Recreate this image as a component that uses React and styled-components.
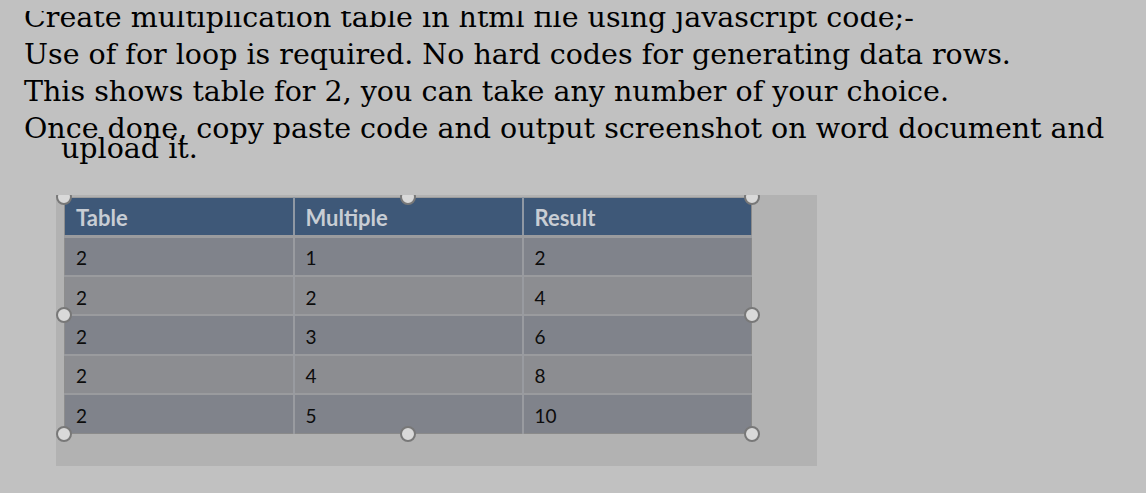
import React from 'react'
import styled, { createGlobalStyle } from 'styled-components'

const GlobalStyle = createGlobalStyle`
  html, body {
    margin: 0;
    padding: 0;
    background: #c1c1c1;
  }
  body {
    width: 1146px;
    height: 493px;
    overflow: hidden;
  }
`

const Page = styled.div`
  width: 1146px;
  height: 493px;
  background: #c1c1c1;
  overflow: hidden;
`

const Prompt = styled.div`
  padding-left: 24px;
  font-family: "DejaVu Serif", Georgia, serif;
  font-size: 28.5px;
  line-height: 37px;
  color: #000;
  white-space: nowrap;
`

// the first line is cut off at the top in the screenshot
const ClippedTop = styled.div`
  margin-top: 11px;
  height: 25px;
  overflow: hidden;
`

const Line = styled.div`
  margin-top: ${p => p.$shift || 0}px;
  padding-left: ${p => p.$indent || 0}px;
`

const Shot = styled.div`
  margin: 28px 0 0 56px;
  width: 761px;
  height: 271px;
  background: #b2b2b2;
  overflow: hidden;
`

const TableFrame = styled.div`
  position: relative;
  margin: 2px 0 0 8px;
  width: 688px;
`

const Table = styled.table`
  width: 100%;
  border-collapse: collapse;
  table-layout: fixed;
  font-family: Lato, "Open Sans", sans-serif;
  border-top: 1px solid #9c9c9c;
  border-left: 1px solid #8e8e8e;
  border-right: 1px solid #8a8a8a;
  border-bottom: 1px solid #8a8a8a;
`

const HeadCell = styled.th`
  box-sizing: border-box;
  height: 39px;
  padding: 1px 0 0 11px;
  background: #3e5878;
  color: #c8cdd4;
  font-size: 22px;
  font-weight: 700;
  text-align: left;
  border-left: 2px solid #8f98a4;
  border-bottom: 3px solid #9a9b9e;
  &:first-child {
    border-left: none;
  }
`

const Cell = styled.td`
  box-sizing: border-box;
  height: 39.4px;
  padding: 3px 0 0 11px;
  background: ${p => (p.$odd ? '#80838b' : '#8c8d91')};
  color: #0c0c0c;
  font-size: 19px;
  text-align: left;
  border-left: 2px solid #999ba0;
  border-top: 2px solid #9a9b9e;
  &:first-child {
    border-left: none;
  }
`

const Handle = styled.span`
  position: absolute;
  left: ${p => p.$x};
  top: ${p => p.$y};
  width: 12px;
  height: 12px;
  border-radius: 50%;
  background: #d9d9d9;
  border: 2.5px solid #787878;
  transform: translate(-50%, -50%);
`

const handles = [
  ['0%', '0%'], ['50%', '0%'], ['100%', '0%'],
  ['0%', '50%'], ['100%', '50%'],
  ['0%', '100%'], ['50%', '100%'], ['100%', '100%'],
]

function MultiplicationTable({ base, count }) {
  const rows = []
  for (let i = 1; i <= count; i++) {
    rows.push(
      <tr key={i}>
        <Cell $odd={i % 2 === 1}>{base}</Cell>
        <Cell $odd={i % 2 === 1}>{i}</Cell>
        <Cell $odd={i % 2 === 1}>{base * i}</Cell>
      </tr>
    )
  }

  return (
    <TableFrame>
      <Table>
        <thead>
          <tr>
            <HeadCell>Table</HeadCell>
            <HeadCell>Multiple</HeadCell>
            <HeadCell>Result</HeadCell>
          </tr>
        </thead>
        <tbody>{rows}</tbody>
      </Table>
      {handles.map(([x, y]) => (
        <Handle key={x + y} $x={x} $y={y} />
      ))}
    </TableFrame>
  )
}

export default function App() {
  return (
    <Page>
      <GlobalStyle />
      <Prompt>
        <ClippedTop>
          <Line $shift={-12}>Create multiplication table in html file using javascript code;-</Line>
        </ClippedTop>
        <Line>Use of for loop is required. No hard codes for generating data rows.</Line>
        <Line>This shows table for 2, you can take any number of your choice.</Line>
        <Line>Once done, copy paste code and output screenshot on word document and</Line>
        <Line $shift={-17} $indent={37}>upload it.</Line>
      </Prompt>
      <Shot>
        <MultiplicationTable base={2} count={5} />
      </Shot>
    </Page>
  )
}
